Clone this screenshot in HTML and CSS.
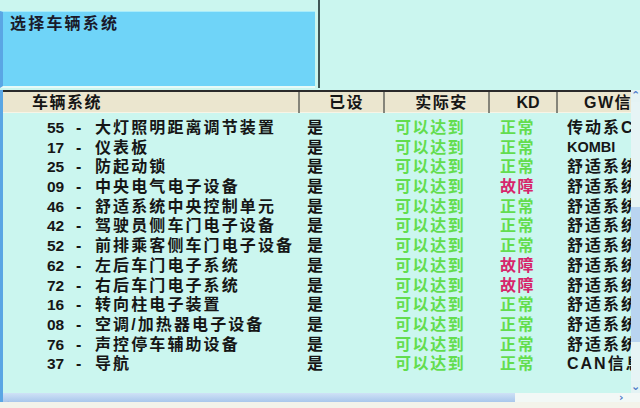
FILE: index.html
```html
<!DOCTYPE html>
<html lang="zh-CN">
<head>
<meta charset="utf-8">
<title>选择车辆系统</title>
<link rel="stylesheet" href="styles.css">
</head>
<body>
<div class="window">
  <div class="top">
    <div class="panel-wrap">
      <div class="panel"><span class="panel-title">选择车辆系统</span></div>
    </div>
    <div class="divider"></div>
    <div class="top-right"></div>
  </div>
  <div class="list">
    <div class="main">
      <div class="grid head">
        <div class="hc hc-name">车辆系统</div>
        <div class="hc">已设</div>
        <div class="hc">实际安</div>
        <div class="hc hc-kd">KD</div>
        <div class="hc hc-gw">GW信息</div>
      </div>
      <div class="rows">
        <div class="grid row"><div class="c name"><span class="num">55</span><span class="dash">-</span><span class="cn">大灯照明距离调节装置</span></div><div class="c yes">是</div><div class="c ok">可以达到</div><div class="c ok kd">正常</div><div class="c gw">传动系C</div></div>
        <div class="grid row"><div class="c name"><span class="num">17</span><span class="dash">-</span><span class="cn">仪表板</span></div><div class="c yes">是</div><div class="c ok">可以达到</div><div class="c ok kd">正常</div><div class="c gw lat">KOMBI</div></div>
        <div class="grid row"><div class="c name"><span class="num">25</span><span class="dash">-</span><span class="cn">防起动锁</span></div><div class="c yes">是</div><div class="c ok">可以达到</div><div class="c ok kd">正常</div><div class="c gw">舒适系统</div></div>
        <div class="grid row"><div class="c name"><span class="num">09</span><span class="dash">-</span><span class="cn">中央电气电子设备</span></div><div class="c yes">是</div><div class="c ok">可以达到</div><div class="c bad kd">故障</div><div class="c gw">舒适系统</div></div>
        <div class="grid row"><div class="c name"><span class="num">46</span><span class="dash">-</span><span class="cn">舒适系统中央控制单元</span></div><div class="c yes">是</div><div class="c ok">可以达到</div><div class="c ok kd">正常</div><div class="c gw">舒适系统</div></div>
        <div class="grid row"><div class="c name"><span class="num">42</span><span class="dash">-</span><span class="cn">驾驶员侧车门电子设备</span></div><div class="c yes">是</div><div class="c ok">可以达到</div><div class="c ok kd">正常</div><div class="c gw">舒适系统</div></div>
        <div class="grid row"><div class="c name"><span class="num">52</span><span class="dash">-</span><span class="cn">前排乘客侧车门电子设备</span></div><div class="c yes">是</div><div class="c ok">可以达到</div><div class="c ok kd">正常</div><div class="c gw">舒适系统</div></div>
        <div class="grid row"><div class="c name"><span class="num">62</span><span class="dash">-</span><span class="cn">左后车门电子系统</span></div><div class="c yes">是</div><div class="c ok">可以达到</div><div class="c bad kd">故障</div><div class="c gw">舒适系统</div></div>
        <div class="grid row"><div class="c name"><span class="num">72</span><span class="dash">-</span><span class="cn">右后车门电子系统</span></div><div class="c yes">是</div><div class="c ok">可以达到</div><div class="c bad kd">故障</div><div class="c gw">舒适系统</div></div>
        <div class="grid row"><div class="c name"><span class="num">16</span><span class="dash">-</span><span class="cn">转向柱电子装置</span></div><div class="c yes">是</div><div class="c ok">可以达到</div><div class="c ok kd">正常</div><div class="c gw">舒适系统</div></div>
        <div class="grid row"><div class="c name"><span class="num">08</span><span class="dash">-</span><span class="cn">空调/加热器电子设备</span></div><div class="c yes">是</div><div class="c ok">可以达到</div><div class="c ok kd">正常</div><div class="c gw">舒适系统</div></div>
        <div class="grid row"><div class="c name"><span class="num">76</span><span class="dash">-</span><span class="cn">声控停车辅助设备</span></div><div class="c yes">是</div><div class="c ok">可以达到</div><div class="c ok kd">正常</div><div class="c gw">舒适系统</div></div>
        <div class="grid row"><div class="c name"><span class="num">37</span><span class="dash">-</span><span class="cn">导航</span></div><div class="c yes">是</div><div class="c ok">可以达到</div><div class="c ok kd">正常</div><div class="c gw">CAN信息</div></div>
      </div>
    </div>
    <div class="vscroll">
      <div class="arrow up">&#8963;</div>
      <div class="track-top"></div>
      <div class="thumb"></div>
      <div class="track-bottom"></div>
      <div class="arrow down">&#8964;</div>
    </div>
  </div>
  <div class="hscroll">
    <div class="hthumb"><span class="harrow">&#8249;</span></div>
    <div class="htrack"></div>
    <div class="harrow-right">&#8250;</div>
    <div class="corner"></div>
  </div>
  <div class="bottom-strip"></div>
</div>
</body>
</html>
```

FILE: styles.css
```css
html, body {
  margin: 0;
  padding: 0;
}
body {
  width: 640px;
  height: 408px;
  overflow: hidden;
  background: #cbf6ef;
  font-family: "Liberation Sans", "Noto Sans CJK SC", sans-serif;
  font-weight: bold;
  color: #161616;
}
.window {
  width: 640px;
  height: 408px;
  display: flex;
  flex-direction: column;
}

/* top area */
.top {
  height: 90px;
  display: flex;
  flex-shrink: 0;
}
.panel-wrap {
  width: 315px;
  padding-top: 11px;
  box-sizing: border-box;
}
.panel {
  height: 77px;
  background: #6fd4f8;
  border-left: 3px solid #5aa6e4;
  border-top: 1px solid #a9ecfb;
  border-bottom: 2px solid #e6fbf8;
  box-sizing: border-box;
  padding: 2px 0 0 7px;
}
.panel-title {
  font-family: "Liberation Sans", "Noto Sans CJK SC", sans-serif;
  font-size: 16px;
  letter-spacing: 2.2px;
  line-height: 20px;
  color: #1a1a2a;
}
.divider {
  width: 2px;
  height: 88px;
  margin-left: 3px;
  background: #3f5656;
}
.top-right {
  flex: 1;
}

/* list */
.list {
  display: flex;
  height: 303px;
  flex-shrink: 0;
}
.main {
  width: 631px;
  border-left: 3px solid #5aa6e4;
  box-sizing: border-box;
  overflow: hidden;
}
.grid {
  display: grid;
  grid-template-columns: 297px 85px 105px 68px 73px;
}
.head {
  height: 23px;
  background: #ebe6cf;
  border-top: 2px solid #2a2a2a;
  border-bottom: 1px solid #f7f4e6;
  box-sizing: border-box;
}
.hc {
  font-size: 16px;
  letter-spacing: 1.5px;
  line-height: 20px;
  padding-top: 1px;
  text-align: center;
  padding-left: 10px;
  border-right: 2px solid #85857a;
  white-space: nowrap;
}
.hc-name {
  text-align: left;
  padding-left: 29px;
}
.hc-kd {
  letter-spacing: 0;
}
.hc-gw {
  text-align: left;
  padding-left: 26px;
  border-right: none;
  overflow: hidden;
}

.rows {
  padding-top: 5px;
}
.row {
  height: 19.7px;
  line-height: 19.7px;
}
.c {
  font-size: 16px;
  white-space: nowrap;
  letter-spacing: 1.6px;
}
.name {
  display: flex;
  letter-spacing: 0;
}
.num {
  font-size: 15.5px;
  margin-left: 44px;
  width: 22px;
}
.dash {
  width: 26px;
  padding-left: 7px;
  box-sizing: border-box;
}
.cn {
  letter-spacing: 2.1px;
}
.yes {
  padding-left: 7px;
}
.ok {
  color: #63dd4e;
  padding-left: 10px;
}
.kd {
  padding-left: 10px;
}
.bad {
  color: #d7256b;
}
.gw {
  padding-left: 9px;
  letter-spacing: 2px;
  overflow: hidden;
}
.lat {
  font-size: 14.5px;
  letter-spacing: 0;
}

/* vertical scrollbar */
.vscroll {
  width: 9px;
  display: flex;
  flex-direction: column;
  background: #e4f3f4;
}
.arrow {
  height: 12px;
  font-size: 11px;
  line-height: 12px;
  text-align: center;
  color: #4e78c8;
  font-family: "DejaVu Sans", sans-serif;
  overflow: hidden;
}
.track-top {
  height: 105px;
  background: #e6f4f5;
}
.thumb {
  height: 135px;
  background: #b9d4f0;
}
.track-bottom {
  flex: 1;
  background: #e6f4f5;
}

/* horizontal scrollbar */
.hscroll {
  height: 9px;
  display: flex;
  flex-shrink: 0;
}
.hthumb {
  width: 515px;
  background: linear-gradient(#cfe2f6, #a9c7ec);
  border-left: 3px solid #5aa6e4;
  box-sizing: border-box;
}
.harrow {
  font-family: "DejaVu Sans", sans-serif;
  font-size: 10px;
  line-height: 9px;
  color: #4e78c8;
  padding-left: 2px;
}
.htrack {
  width: 104px;
  background: #f2f8f6;
}
.harrow-right {
  width: 12px;
  background: #f2f8f6;
  font-family: "DejaVu Sans", sans-serif;
  font-size: 11px;
  line-height: 10px;
  color: #4e78c8;
}
.corner {
  flex: 1;
  background: #f2f8f6;
}
.bottom-strip {
  flex: 1;
  background: #f3f3ea;
}
```
